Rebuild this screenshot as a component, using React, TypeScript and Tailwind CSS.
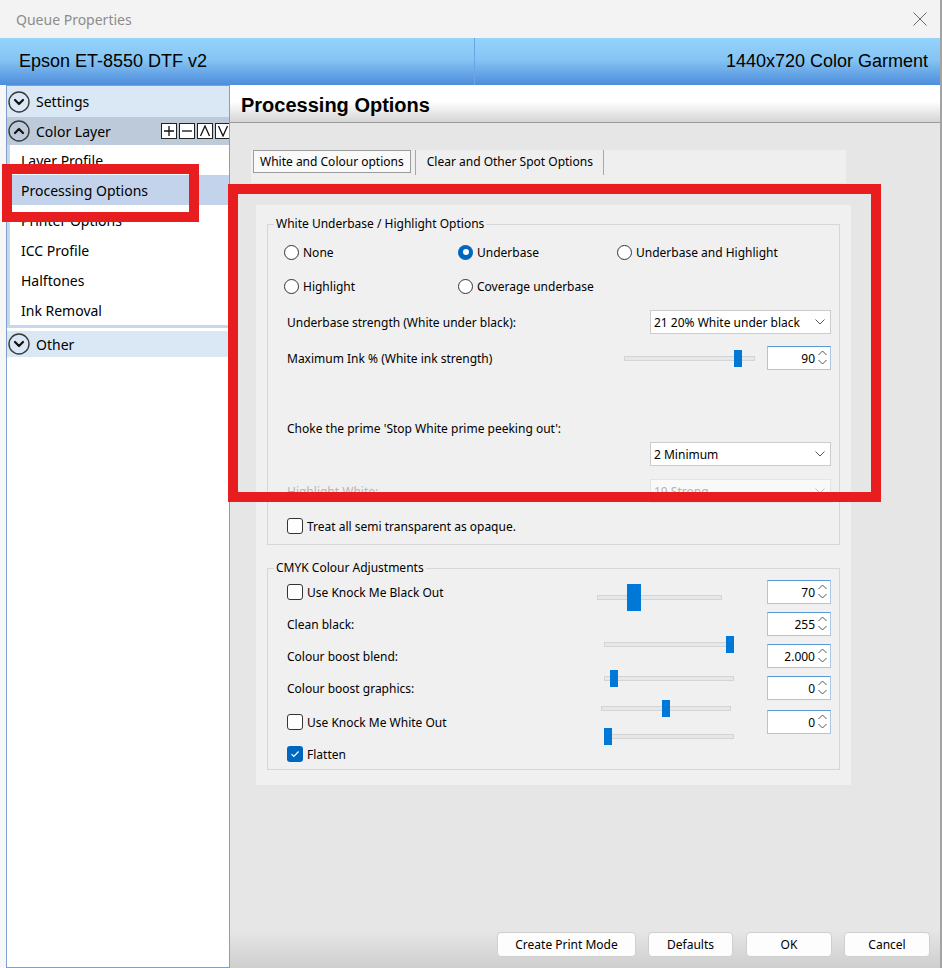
import React from 'react';

const ui = "font-['Noto_Sans',sans-serif]";

const CircleChevron = ({ up = false }: { up?: boolean }) => (
  <svg width="22" height="22" viewBox="0 0 22 22">
    <circle cx="11" cy="11" r="10" fill="none" stroke="#3a3a3a" strokeWidth="1.4" />
    <path d={up ? 'M7 13l4-4 4 4' : 'M7 9l4 4 4-4'} fill="none" stroke="#111" strokeWidth="2.2" strokeLinecap="round" strokeLinejoin="round" />
  </svg>
);

const MiniBox = ({ d }: { d: string }) => (
  <div className="w-[16px] h-[16px] shrink-0 border border-[#222] bg-white flex items-center justify-center">
    <svg width="12" height="12" viewBox="0 0 12 12">
      <path d={d} fill="none" stroke="#111" strokeWidth="1.3" />
    </svg>
  </div>
);

const Radio = ({ checked = false, label }: { checked?: boolean; label: string }) => (
  <div className="flex items-center gap-[4px]">
    {checked ? <div className="w-[15px] h-[15px] rounded-full bg-[#0067c0] flex items-center justify-center">
        <div className="w-[6px] h-[6px] rounded-full bg-white" />
      </div> : <div className="w-[15px] h-[15px] rounded-full border border-[#333] bg-white" />}
    <span className="pt-px">{label}</span>
  </div>
);

const Check = ({ checked = false, label }: { checked?: boolean; label: string }) => (
  <div className="flex items-center gap-[4px]">
    {checked ? <div className="w-[16px] h-[16px] rounded-[3px] bg-[#0067c0] flex items-center justify-center">
        <svg width="10" height="10" viewBox="0 0 10 10">
          <path d="M1.5 5.2l2.3 2.3L8.6 2.5" fill="none" stroke="white" strokeWidth="1.2" />
        </svg>
      </div> : <div className="w-[16px] h-[16px] rounded-[3px] border border-[#333] bg-white" />}
    <span className="pt-px">{label}</span>
  </div>
);

const Dropdown = ({ value, disabled = false }: { value: string; disabled?: boolean }) => (
  <div className={`w-[181px] h-[24px] flex items-center justify-between pl-[3px] pr-[5px] border ${disabled ? 'bg-[#f9f9f9] border-[#e4e4e4] text-[#b3b3b3]' : 'bg-white border-[#cccccc]'}`}>
    <span className="pt-px">{value}</span>
    <svg width="10" height="6" viewBox="0 0 10 6">
      <path d="M0.5 0.5l4.5 4.5 4.5-4.5" fill="none" stroke={disabled ? '#bbb' : '#555'} strokeWidth="1" />
    </svg>
  </div>
);

const Spin = ({ value, className = '' }: { value: string; className?: string }) => (
  <div className={`w-[64px] h-[24px] bg-white border border-[#aac6e2] border-t-[#5a9ad6] flex items-center justify-end ${className}`}>
    <span className="leading-none pt-px">{value}</span>
    <svg width="15" height="22" viewBox="0 0 15 22" className="shrink-0">
      <path d="M3.5 8l4-4 4 4" fill="none" stroke="#555" strokeWidth="1" />
      <path d="M3.5 13l4 4 4-4" fill="none" stroke="#555" strokeWidth="1" />
    </svg>
  </div>
);

const Slider = ({ box, thumb }: { box: string; thumb: string }) => (
  <div className={`relative flex items-center ${box}`}>
    <div className="w-full h-[5px] bg-[#e7e7e7] border border-[#d4d4d4]" />
    <div className={`absolute top-0 h-full bg-[#0078d7] ${thumb}`} />
  </div>
);

const Legend = ({ children }: { children: React.ReactNode }) => (
  <div className="-mt-[9px] ml-[6px] px-[2px] w-fit h-[16px] leading-[16px] bg-[#f0f0f0]">{children}</div>
);

export default function App() {
  const items = ['Layer Profile', 'Processing Options', 'Printer Options', 'ICC Profile', 'Halftones', 'Ink Removal'];
  return <div className="relative w-[942px] h-[968px] overflow-hidden flex flex-col bg-[#f7f7f7] border-r-2 border-[#a3a3a3]">
      {/* Title bar */}
      <div className={`${ui} h-[38px] shrink-0 flex items-center justify-between pl-[16px] pr-[13px] bg-[#f3f3f3]`}>
        <span className="text-[14px] text-[#8c8c8c]">Queue Properties</span>
        <svg width="14" height="14" viewBox="0 0 14 14">
          <path d="M0.5 0.5l13 13M13.5 0.5l-13 13" stroke="#6b6b6b" strokeWidth="1" />
        </svg>
      </div>

      {/* Blue header */}
      <div className="h-[47px] shrink-0 flex bg-linear-to-b from-[#94d3fc] via-[#86c5f3] via-45% to-[#4e8ddb] font-['Liberation_Sans',Arial,sans-serif] text-[18px] text-black">
        <div className="w-[475px] border-r border-[#6aa6e3] flex items-center pl-[19px]">Epson ET-8550 DTF v2</div>
        <div className="flex-1 flex items-center justify-end pr-[12px]">1440x720 Color Garment</div>
      </div>

      <div className="flex-1 flex min-h-0">
        {/* Sidebar */}
        <div className={`${ui} ml-[6px] w-[224px] shrink-0 bg-white border border-[#7fa0cf] overflow-hidden text-[14px] text-black flex flex-col`}>
          <div className="h-[31px] shrink-0 flex items-center gap-[6px] pl-[1px] bg-[#dae7f5]">
            <CircleChevron />
            <span>Settings</span>
          </div>
          <div className="h-[28px] shrink-0 flex items-center gap-[6px] pl-[1px] bg-[#bccad9]">
            <CircleChevron up />
            <span>Color Layer</span>
            <div className="ml-auto flex gap-[2px] -mr-[2px]">
              <MiniBox d="M1 6h10M6 1v10" />
              <MiniBox d="M1 6h10" />
              <MiniBox d="M1.5 11L6 1l4.5 10" />
              <MiniBox d="M1.5 1L6 11l4.5-10" />
            </div>
          </div>
          <div className="border-l-[3px] border-b-[3px] border-[#c8d8ec] flex flex-col">
            {items.map(i => <div key={i} className={`h-[30px] flex items-center ${i === 'Processing Options' ? 'bg-[#c3d3eb] ml-[2px] pl-[9px]' : 'pl-[11px]'}`}>
                {i}
              </div>)}
          </div>
          <div className="mt-[3px] h-[26px] shrink-0 flex items-center gap-[6px] pl-[1px] bg-[#dae7f5]">
            <CircleChevron />
            <span>Other</span>
          </div>
        </div>

        {/* Main */}
        <div className={`${ui} flex-1 flex flex-col text-[12px] text-black`}>
          <div className="h-[38px] shrink-0 flex items-center pl-[11px] pt-[3px] border-b border-[#9a9a9a] bg-linear-to-b from-white from-45% to-[#d5d5d5] font-['Liberation_Sans',Arial,sans-serif] font-bold text-[20px]">
            Processing Options
          </div>
          <div className="flex-1 flex flex-col bg-[#e6e6e6]">
            {/* Tabs */}
            <div className="mt-[27px] ml-[21px] w-[595px] h-[33px] bg-[#efefef] flex items-start pl-[2px]">
              <div className="h-[23px] px-[6px] pt-px flex items-center border border-[#9c9c9c] bg-[#f9f9f9]">White and Colour options</div>
              <div className="ml-[4px] w-px h-[25px] bg-[#a8a8a8]" />
              <div className="h-[23px] ml-[11px] pt-px flex items-center">Clear and Other Spot Options</div>
              <div className="ml-[10px] w-px h-[25px] bg-[#a8a8a8]" />
            </div>

            {/* Panel */}
            <div className="mt-[22px] ml-[26px] w-[595px] h-[580px] bg-[#f0f0f0] px-[11px] flex flex-col">
              <div className="mt-[19px] border border-[#d7d7d7] flex flex-col pb-[8px]">
                <Legend>White Underbase / Highlight Options</Legend>
                <div className="h-[40px] flex items-center pl-[16px]">
                  <div className="w-[174px]"><Radio label="None" /></div>
                  <div className="w-[159px]"><Radio checked label="Underbase" /></div>
                  <Radio label="Underbase and Highlight" />
                </div>
                <div className="h-[28px] flex items-center pl-[16px]">
                  <div className="w-[174px]"><Radio label="Highlight" /></div>
                  <Radio label="Coverage underbase" />
                </div>
                <div className="h-[44px] flex items-center justify-between pl-[19px] pr-[8px]">
                  <span className="pt-px">Underbase strength (White under black):</span>
                  <Dropdown value="21 20% White under black" />
                </div>
                <div className="h-[28px] flex items-center justify-between pl-[19px] pr-[8px]">
                  <span className="pt-px">Maximum Ink % (White ink strength)</span>
                  <div className="flex items-center gap-[12px]">
                    <Slider box="w-[131px] h-[17px]" thumb="left-[110px] w-[8px]" />
                    <Spin value="90" />
                  </div>
                </div>
                <div className="h-[42px]" />
                <div className="h-[28px] flex items-center pl-[19px] pt-px">Choke the prime 'Stop White prime peeking out':</div>
                <div className="h-[24px] flex justify-end pr-[8px]">
                  <Dropdown value="2 Minimum" />
                </div>
                <div className="h-[50px] flex items-center justify-between pl-[19px] pr-[8px]">
                  <span className="pt-px text-[#b5b5b5]">Highlight White:</span>
                  <Dropdown value="19 Strong" disabled />
                </div>
                <div className="h-[20px] flex items-center pl-[19px]">
                  <Check label="Treat all semi transparent as opaque." />
                </div>
              </div>

              <div className="mt-[23px] border border-[#d7d7d7] flex flex-col pb-[1px]">
                <Legend>CMYK Colour Adjustments</Legend>
                <div className="flex">
                  <div className="w-[329px] pl-[19px] flex flex-col">
                    <div className="h-[32px] flex items-center"><Check label="Use Knock Me Black Out" /></div>
                    <div className="h-[32px] flex items-center pt-px">Clean black:</div>
                    <div className="h-[32px] flex items-center pt-px">Colour boost blend:</div>
                    <div className="h-[32px] flex items-center pt-px">Colour boost graphics:</div>
                    <div className="h-[36px] flex items-center"><Check label="Use Knock Me White Out" /></div>
                    <div className="h-[28px] flex items-center"><Check checked label="Flatten" /></div>
                  </div>
                  <div className="w-[170px] flex flex-col">
                    <div className="mt-[8px]"><Slider box="w-[125px] h-[27px]" thumb="left-[30px] w-[14px]" /></div>
                    <div className="mt-[25px] ml-[7px]"><Slider box="w-[130px] h-[17px]" thumb="left-[122px] w-[8px]" /></div>
                    <div className="mt-[17px] ml-[7px]"><Slider box="w-[130px] h-[17px]" thumb="left-[6px] w-[8px]" /></div>
                    <div className="mt-[13px] ml-[4px]"><Slider box="w-[130px] h-[17px]" thumb="left-[61px] w-[8px]" /></div>
                    <div className="mt-[11px] ml-[7px]"><Slider box="w-[130px] h-[17px]" thumb="left-0 w-[8px]" /></div>
                  </div>
                  <div className="w-[64px] flex flex-col">
                    <Spin value="70" className="mt-[4px]" />
                    <Spin value="255" className="mt-[8px]" />
                    <Spin value="2.000" className="mt-[8px]" />
                    <Spin value="0" className="mt-[8px]" />
                    <Spin value="0" className="mt-[10px]" />
                  </div>
                </div>
              </div>
            </div>

            <div className="flex-1" />

            {/* Footer buttons */}
            <div className="h-[44px] shrink-0 flex justify-end items-start gap-[12px] pt-[8px] pr-[10px] bg-linear-to-b from-[#e6e6e6] from-[15%] to-[#cecece]">
              <button className="w-[139px] h-[25px] pt-px rounded-[4px] border border-[#cfcfcf] bg-[#fdfdfd]">Create Print Mode</button>
              <button className="w-[85px] h-[25px] pt-px rounded-[4px] border border-[#cfcfcf] bg-[#fdfdfd]">Defaults</button>
              <button className="ml-[1px] w-[86px] h-[25px] pt-px rounded-[4px] border border-[#cfcfcf] bg-[#fdfdfd]">OK</button>
              <button className="w-[86px] h-[25px] pt-px rounded-[4px] border border-[#cfcfcf] bg-[#fdfdfd]">Cancel</button>
            </div>
          </div>
        </div>
      </div>

      {/* Red annotation boxes */}
      <div className="absolute left-[2px] top-[164px] w-[197px] h-[58px] border-[10px] border-[#e81d1f]" />
      <div className="absolute left-[228px] top-[184px] w-[653px] h-[318px] border-[10px] border-[#e81d1f]" />
    </div>;
}
